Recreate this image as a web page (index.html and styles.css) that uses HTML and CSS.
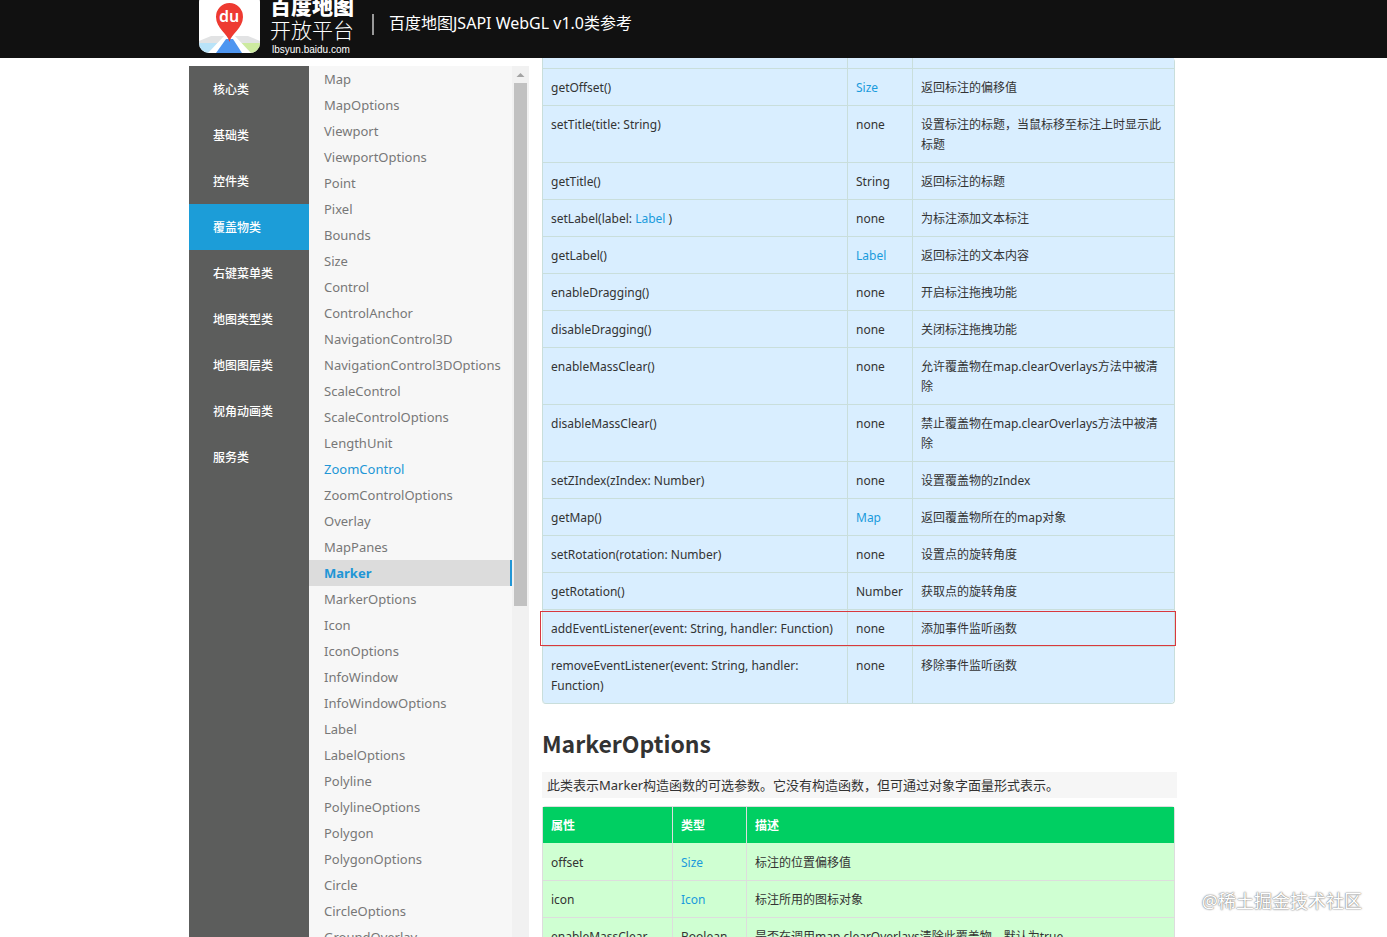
FILE: index.html
```html
<!DOCTYPE html>
<html lang="zh-CN">
<head>
  <meta charset="utf-8">
  <title>百度地图JSAPI WebGL v1.0类参考</title>
  <link rel="stylesheet" href="styles.css">
</head>
<body>
  <header class="header">
    <div class="header-inner">
      <a class="logo" href="#">
        <svg class="logo-icon" width="61" height="61" viewBox="0 0 61 61" aria-hidden="true">
          <defs>
            <clipPath id="tile"><rect width="61" height="61" rx="10"/></clipPath>
          </defs>
          <g clip-path="url(#tile)">
            <rect width="61" height="61" fill="#fff"/>
            <path d="M12 44h37l12 5v2H0v-2z" fill="#e2e3e4"/>
            <path d="M0 51h19L11 61H0z" fill="#b9e3f8"/>
            <path d="M42 51h19v10H50z" fill="#cdeaa0"/>
            <path d="M27 42h7l18 19H9z" fill="#fff"/>
            <path d="M27 47h7l9 14H17z" fill="#4f96f0"/>
            <path d="M30.500 50C29 42 17 36 17 25a13.500 14 0 0 1 27 0C44 36 32 42 30.500 50z" fill="#ee3a31"/>
          </g>
          <text class="logo-du" x="30" y="30" text-anchor="middle">du</text>
        </svg>
        <span class="logo-text">
          <span class="logo-name">百度地图</span>
          <span class="logo-sub">开放平台</span>
          <span class="logo-site">lbsyun.baidu.com</span>
        </span>
      </a>
      <span class="divider"></span>
      <h1 class="title">百度地图JSAPI WebGL v1.0类参考</h1>
    </div>
  </header>

  <div class="container">
    <nav class="category">
      <a href="#">核心类</a>
      <a href="#">基础类</a>
      <a href="#">控件类</a>
      <a href="#" class="active">覆盖物类</a>
      <a href="#">右键菜单类</a>
      <a href="#">地图类型类</a>
      <a href="#">地图图层类</a>
      <a href="#">视角动画类</a>
      <a href="#">服务类</a>
    </nav>

    <nav class="classes">
      <div class="class-list">
        <a href="#">Map</a>
        <a href="#">MapOptions</a>
        <a href="#">Viewport</a>
        <a href="#">ViewportOptions</a>
        <a href="#">Point</a>
        <a href="#">Pixel</a>
        <a href="#">Bounds</a>
        <a href="#">Size</a>
        <a href="#">Control</a>
        <a href="#">ControlAnchor</a>
        <a href="#">NavigationControl3D</a>
        <a href="#">NavigationControl3DOptions</a>
        <a href="#">ScaleControl</a>
        <a href="#">ScaleControlOptions</a>
        <a href="#">LengthUnit</a>
        <a href="#" class="hover">ZoomControl</a>
        <a href="#">ZoomControlOptions</a>
        <a href="#">Overlay</a>
        <a href="#">MapPanes</a>
        <a href="#" class="active">Marker</a>
        <a href="#">MarkerOptions</a>
        <a href="#">Icon</a>
        <a href="#">IconOptions</a>
        <a href="#">InfoWindow</a>
        <a href="#">InfoWindowOptions</a>
        <a href="#">Label</a>
        <a href="#">LabelOptions</a>
        <a href="#">Polyline</a>
        <a href="#">PolylineOptions</a>
        <a href="#">Polygon</a>
        <a href="#">PolygonOptions</a>
        <a href="#">Circle</a>
        <a href="#">CircleOptions</a>
        <a href="#">GroundOverlay</a>
      </div>
      <div class="scrollbar">
        <svg width="13" height="17" viewBox="0 0 13 17" aria-hidden="true"><path d="M2.500 11l4-4 4 4z" fill="#a3a3a3"/></svg>
        <div class="thumb"></div>
      </div>
    </nav>

    <main class="content">
      <table class="table methods">
        <colgroup><col class="col-method"><col class="col-return"><col></colgroup>
        <tbody>
          <tr class="partial"><td></td><td></td><td></td></tr>
          <tr><td>getOffset()</td><td><a href="#">Size</a></td><td>返回标注的偏移值</td></tr>
          <tr><td>setTitle(title: String)</td><td>none</td><td>设置标注的标题，当鼠标移至标注上时显示此标题</td></tr>
          <tr><td>getTitle()</td><td>String</td><td>返回标注的标题</td></tr>
          <tr><td>setLabel(label: <a href="#">Label</a> )</td><td>none</td><td>为标注添加文本标注</td></tr>
          <tr><td>getLabel()</td><td><a href="#">Label</a></td><td>返回标注的文本内容</td></tr>
          <tr><td>enableDragging()</td><td>none</td><td>开启标注拖拽功能</td></tr>
          <tr><td>disableDragging()</td><td>none</td><td>关闭标注拖拽功能</td></tr>
          <tr><td>enableMassClear()</td><td>none</td><td>允许覆盖物在map.clearOverlays方法中被清除</td></tr>
          <tr><td>disableMassClear()</td><td>none</td><td>禁止覆盖物在map.clearOverlays方法中被清除</td></tr>
          <tr><td>setZIndex(zIndex: Number)</td><td>none</td><td>设置覆盖物的zIndex</td></tr>
          <tr><td>getMap()</td><td><a href="#">Map</a></td><td>返回覆盖物所在的map对象</td></tr>
          <tr><td>setRotation(rotation: Number)</td><td>none</td><td>设置点的旋转角度</td></tr>
          <tr><td>getRotation()</td><td>Number</td><td>获取点的旋转角度</td></tr>
          <tr class="marked"><td>addEventListener(event: String, handler: Function)</td><td>none</td><td>添加事件监听函数</td></tr>
          <tr><td>removeEventListener(event: String, handler: Function)</td><td>none</td><td>移除事件监听函数</td></tr>
        </tbody>
      </table>

      <h2>MarkerOptions</h2>
      <p class="desc">此类表示Marker构造函数的可选参数。它没有构造函数，但可通过对象字面量形式表示。</p>

      <table class="table props">
        <colgroup><col class="col-prop"><col class="col-type"><col></colgroup>
        <thead>
          <tr><th>属性</th><th>类型</th><th>描述</th></tr>
        </thead>
        <tbody>
          <tr><td>offset</td><td><a href="#">Size</a></td><td>标注的位置偏移值</td></tr>
          <tr><td>icon</td><td><a href="#">Icon</a></td><td>标注所用的图标对象</td></tr>
          <tr><td>enableMassClear</td><td>Boolean</td><td>是否在调用map.clearOverlays清除此覆盖物，默认为true</td></tr>
        </tbody>
      </table>
    </main>
  </div>

  <div class="watermark">@稀土掘金技术社区</div>
</body>
</html>
```

FILE: styles.css
```css
* {
  box-sizing: border-box;
}
body {
  margin: 0;
  height: 100vh;
  overflow: hidden;
  display: flex;
  flex-direction: column;
  background: #fff;
  color: #333;
  font-family: "Noto Sans", "Noto Sans CJK SC", sans-serif;
  font-size: 12px;
  line-height: 20px;
}
a {
  color: #1a9bdc;
  text-decoration: none;
}

/* Header */
.header {
  flex: none;
  height: 58px;
  overflow: hidden;
  background: #111;
  color: #fff;
}
.header-inner {
  max-width: 1009px;
  height: 100%;
  margin: 0 auto;
  padding-left: 10px;
  display: flex;
  align-items: flex-end;
}
.logo {
  display: flex;
  align-items: flex-end;
  gap: 10px;
  color: #fff;
}
.logo-icon {
  display: block;
  margin-bottom: 5px;
}
.logo-du {
  fill: #fff;
  font-family: "Noto Sans", sans-serif;
  font-size: 16px;
  font-weight: 600;
}
.logo-text {
  display: flex;
  flex-direction: column;
}
.logo-name,
.logo-sub {
  font-family: "Noto Sans CJK SC", sans-serif;
  font-size: 21px;
  line-height: 24px;
}
.logo-name {
  font-weight: 900;
}
.logo-sub {
  font-weight: 300;
}
.logo-site {
  padding-left: 2px;
  font-family: "Liberation Sans", sans-serif;
  font-size: 10px;
  line-height: 17px;
}
.divider {
  width: 2px;
  height: 21px;
  margin: 0 15px 23px 18px;
  background: #999;
}
.title {
  margin: 0 0 23px;
  font-size: 16px;
  font-weight: 400;
  line-height: 24px;
}

/* Columns */
.container {
  flex: 1;
  min-height: 0;
  width: 100%;
  max-width: 1009px;
  margin: 0 auto;
  padding-right: 21px;
  display: grid;
  grid-template-columns: 120px 220px 1fr;
  grid-template-rows: 100%;
}
.category {
  margin-top: 8px;
  background: #5c5d5c;
}
.category a {
  display: block;
  padding: 14px 0 12px 24px;
  color: #fff;
  font-weight: 500;
}
.category a.active {
  background: #1c9dd8;
}
.classes {
  margin-top: 8px;
  overflow: hidden;
  display: flex;
  background: #f7f7f7;
}
.class-list {
  flex: 1;
  min-width: 0;
}
.class-list a {
  display: block;
  padding-left: 15px;
  color: #777;
  font-size: 13px;
  line-height: 26px;
}
.class-list a.hover {
  color: #2196d6;
}
.class-list a.active {
  border-right: 2px solid #2196d6;
  background: #dcdcdc;
  color: #2196d6;
  font-weight: 700;
}
.scrollbar {
  flex: none;
  width: 17px;
  padding: 0 2px;
  background: #f1f1f1;
}
.scrollbar svg {
  display: block;
}
.thumb {
  height: 60%;
  background: #c1c1c1;
}

/* Docs */
.content {
  padding-left: 13px;
  overflow: hidden;
}
.table {
  width: calc(100% - 2px);
  table-layout: fixed;
  border-collapse: separate;
  border-spacing: 0;
  border: 1px solid #ddd;
  border-left: 0;
  border-radius: 4px;
}
.table th,
.table td {
  padding: 9px 8px 7px;
  border-left: 1px solid #ddd;
  border-top: 1px solid #ddd;
  text-align: left;
  vertical-align: top;
}
.table.methods {
  border-top: 0;
  border-color: #c9dedb;
}
.methods td {
  background: #d9eeff;
}
.table.methods td {
  border-color: #c9dedb;
}
.table.methods .partial td {
  height: 10px;
  padding: 0;
  border-top: 0;
}
.methods tr:last-child td:first-child {
  border-bottom-left-radius: 4px;
}
.methods tr:last-child td:last-child {
  border-bottom-right-radius: 4px;
}
.col-method {
  width: 305px;
}
.col-return {
  width: 65px;
}
.marked {
  position: relative;
  z-index: 1;
}
/* Frame drawn over the row */
.marked td:first-child::after {
  content: "";
  position: absolute;
  inset: 2px -2px 0 -2px;
  border: 1px solid #d9383e;
}
h2 {
  margin: 23px 0 13px;
  font-family: "Noto Sans CJK SC", sans-serif;
  font-size: 23px;
  font-weight: 700;
  line-height: 32px;
}
.desc {
  margin: 0 0 8px;
  padding: 0 5px;
  background: #f6f6f6;
  font-size: 13px;
  line-height: 26px;
}
.col-prop {
  width: 130px;
}
.col-type {
  width: 74px;
}
.table.props th {
  border-top: 0;
  background: #00cf62;
  color: #fff;
}
.table.props td {
  background: #cfffd2;
}
.table.props tbody tr:first-child td {
  border-top: 0;
  padding-top: 10px;
}

.watermark {
  position: absolute;
  right: 25px;
  bottom: 24px;
  color: #fff;
  font-size: 18px;
  line-height: 24px;
  text-shadow: 0 0 2px #777, 0 0 1px #777;
}
```
